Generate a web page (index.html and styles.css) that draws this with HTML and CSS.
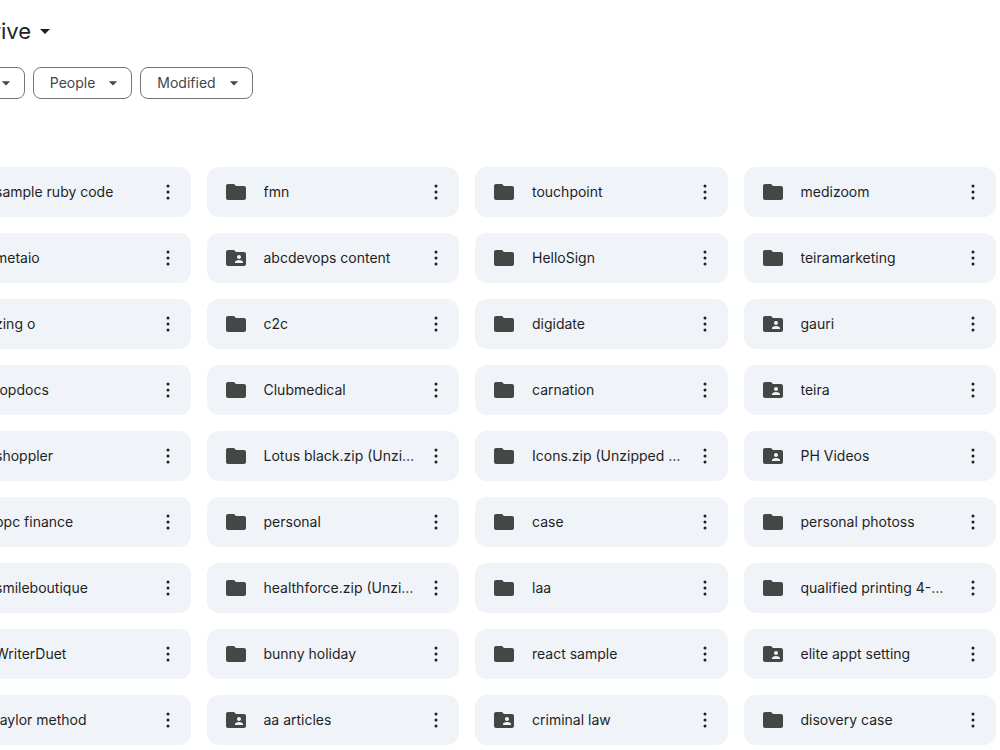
FILE: index.html
```html
<!DOCTYPE html>
<html lang="en">
<head>
  <meta charset="UTF-8" />
  <meta name="viewport" content="width=device-width, initial-scale=1.0" />
  <title>My Drive</title>
  <link rel="stylesheet" href="styles.css">
</head>
<body>
  <!-- Shared icons -->
  <svg class="sprite" aria-hidden="true">
    <symbol id="arrow" viewBox="0 0 24 24"><path d="M7 10l5 5 5-5z"/></symbol>
    <symbol id="folder" viewBox="0 0 24 24"><path d="M10 4H4c-1.1 0-1.99.9-1.99 2L2 18c0 1.1.9 2 2 2h16c1.1 0 2-.9 2-2V8c0-1.1-.9-2-2-2h-8l-2-2z"/></symbol>
    <symbol id="shared" viewBox="0 0 24 24"><path d="M20 6h-8l-2-2H4c-1.1 0-1.99.9-1.99 2L2 18c0 1.1.9 2 2 2h16c1.1 0 2-.9 2-2V8c0-1.1-.9-2-2-2zm-5 3c1.1 0 2 .9 2 2s-.9 2-2 2-2-.9-2-2 .9-2 2-2zm4 8h-8v-1c0-1.33 2.67-2 4-2s4 .67 4 2v1z"/></symbol>
    <symbol id="dots" viewBox="0 0 24 24"><circle cx="12" cy="6" r="1.5"/><circle cx="12" cy="12" r="1.5"/><circle cx="12" cy="18" r="1.5"/></symbol>
  </svg>

  <main class="drive">
    <h1 class="title">
      <button class="title-button">My Drive <svg class="icon"><use href="#arrow"/></svg></button>
    </h1>

    <div class="filters">
      <button class="chip">Type <svg class="chip-arrow"><use href="#arrow"/></svg></button>
      <button class="chip">People <svg class="chip-arrow"><use href="#arrow"/></svg></button>
      <button class="chip">Modified <svg class="chip-arrow"><use href="#arrow"/></svg></button>
    </div>

    <ul class="folders" id="folders"></ul>
  </main>

  <script>
    // a leading * marks a shared folder
    const folders = [
      "sample ruby code", "fmn", "touchpoint", "medizoom",
      "metaio", "*abcdevops content", "HelloSign", "teiramarketing",
      "zing o", "c2c", "digidate", "*gauri",
      "topdocs", "Clubmedical", "carnation", "*teira",
      "shoppler", "Lotus black.zip (Unzipped Files)", "Icons.zip (Unzipped Files)", "*PH Videos",
      "ppc finance", "personal", "case", "personal photoss",
      "smileboutique", "healthforce.zip (Unzipped Files)", "laa", "qualified printing 4-March",
      "WriterDuet", "bunny holiday", "react sample", "*elite appt setting",
      "taylor method", "*aa articles", "*criminal law", "disovery case"
    ];

    document.getElementById("folders").innerHTML = folders.map(item => {
      const shared = item.startsWith("*");
      const name = shared ? item.slice(1) : item;
      return `<li class="folder">
        <svg class="icon folder-icon"><use href="#${shared ? "shared" : "folder"}"/></svg>
        <span class="folder-name">${name}</span>
        <button class="more" aria-label="More actions for ${name}"><svg class="icon"><use href="#dots"/></svg></button>
      </li>`;
    }).join("");
  </script>
</body>
</html>
```
FILE: styles.css
```css
body {
  margin: 0;
  background-color: #fff;
  color: #1f1f1f;
  font-family: Inter, sans-serif;
  font-size: 14px;
  line-height: 20px;
  overflow: hidden;
}

button {
  font: inherit;
  color: inherit;
  background: none;
  border: none;
  padding: 0;
  cursor: pointer;
}

svg {
  fill: currentColor;
  flex: none;
}

.sprite {
  display: none;
}

.icon {
  width: 24px;
  height: 24px;
}

/* the left side of the list runs under the window edge */
.drive {
  margin-left: -62px;
  padding: 15px 4px 0 0;
}

.title {
  margin: 0;
  font-size: 22px;
  font-weight: 400;
  line-height: 32px;
}

.title-button {
  display: flex;
  align-items: center;
  gap: 2px;
}

.filters {
  display: flex;
  gap: 8px;
  margin-top: 20px;
}

.chip {
  display: flex;
  align-items: center;
  gap: 8px;
  height: 32px;
  padding: 0 8px 0 16px;
  border: 1px solid #747775;
  border-radius: 8px;
  color: #444746;
}

.chip-arrow {
  width: 20px;
  height: 20px;
}

.folders {
  display: grid;
  grid-template-columns: repeat(4, minmax(0, 1fr));
  gap: 16px;
  margin: 68px 0 0;
  padding: 0;
  list-style: none;
}

.folder {
  display: flex;
  align-items: center;
  height: 50px;
  padding: 0 7px 0 17px;
  box-sizing: border-box;
  border-radius: 12px;
  background-color: #f0f4f9;
}

.folder-icon {
  color: #444746;
}

.folder-name {
  flex: 1;
  min-width: 0;
  margin: 0 4px 0 16px;
  overflow: hidden;
  white-space: nowrap;
  text-overflow: ellipsis;
}

.more {
  display: flex;
  align-items: center;
  justify-content: center;
  width: 32px;
  height: 32px;
  border-radius: 50%;
}

.more:hover {
  background-color: #e1e5ea;
}
```
